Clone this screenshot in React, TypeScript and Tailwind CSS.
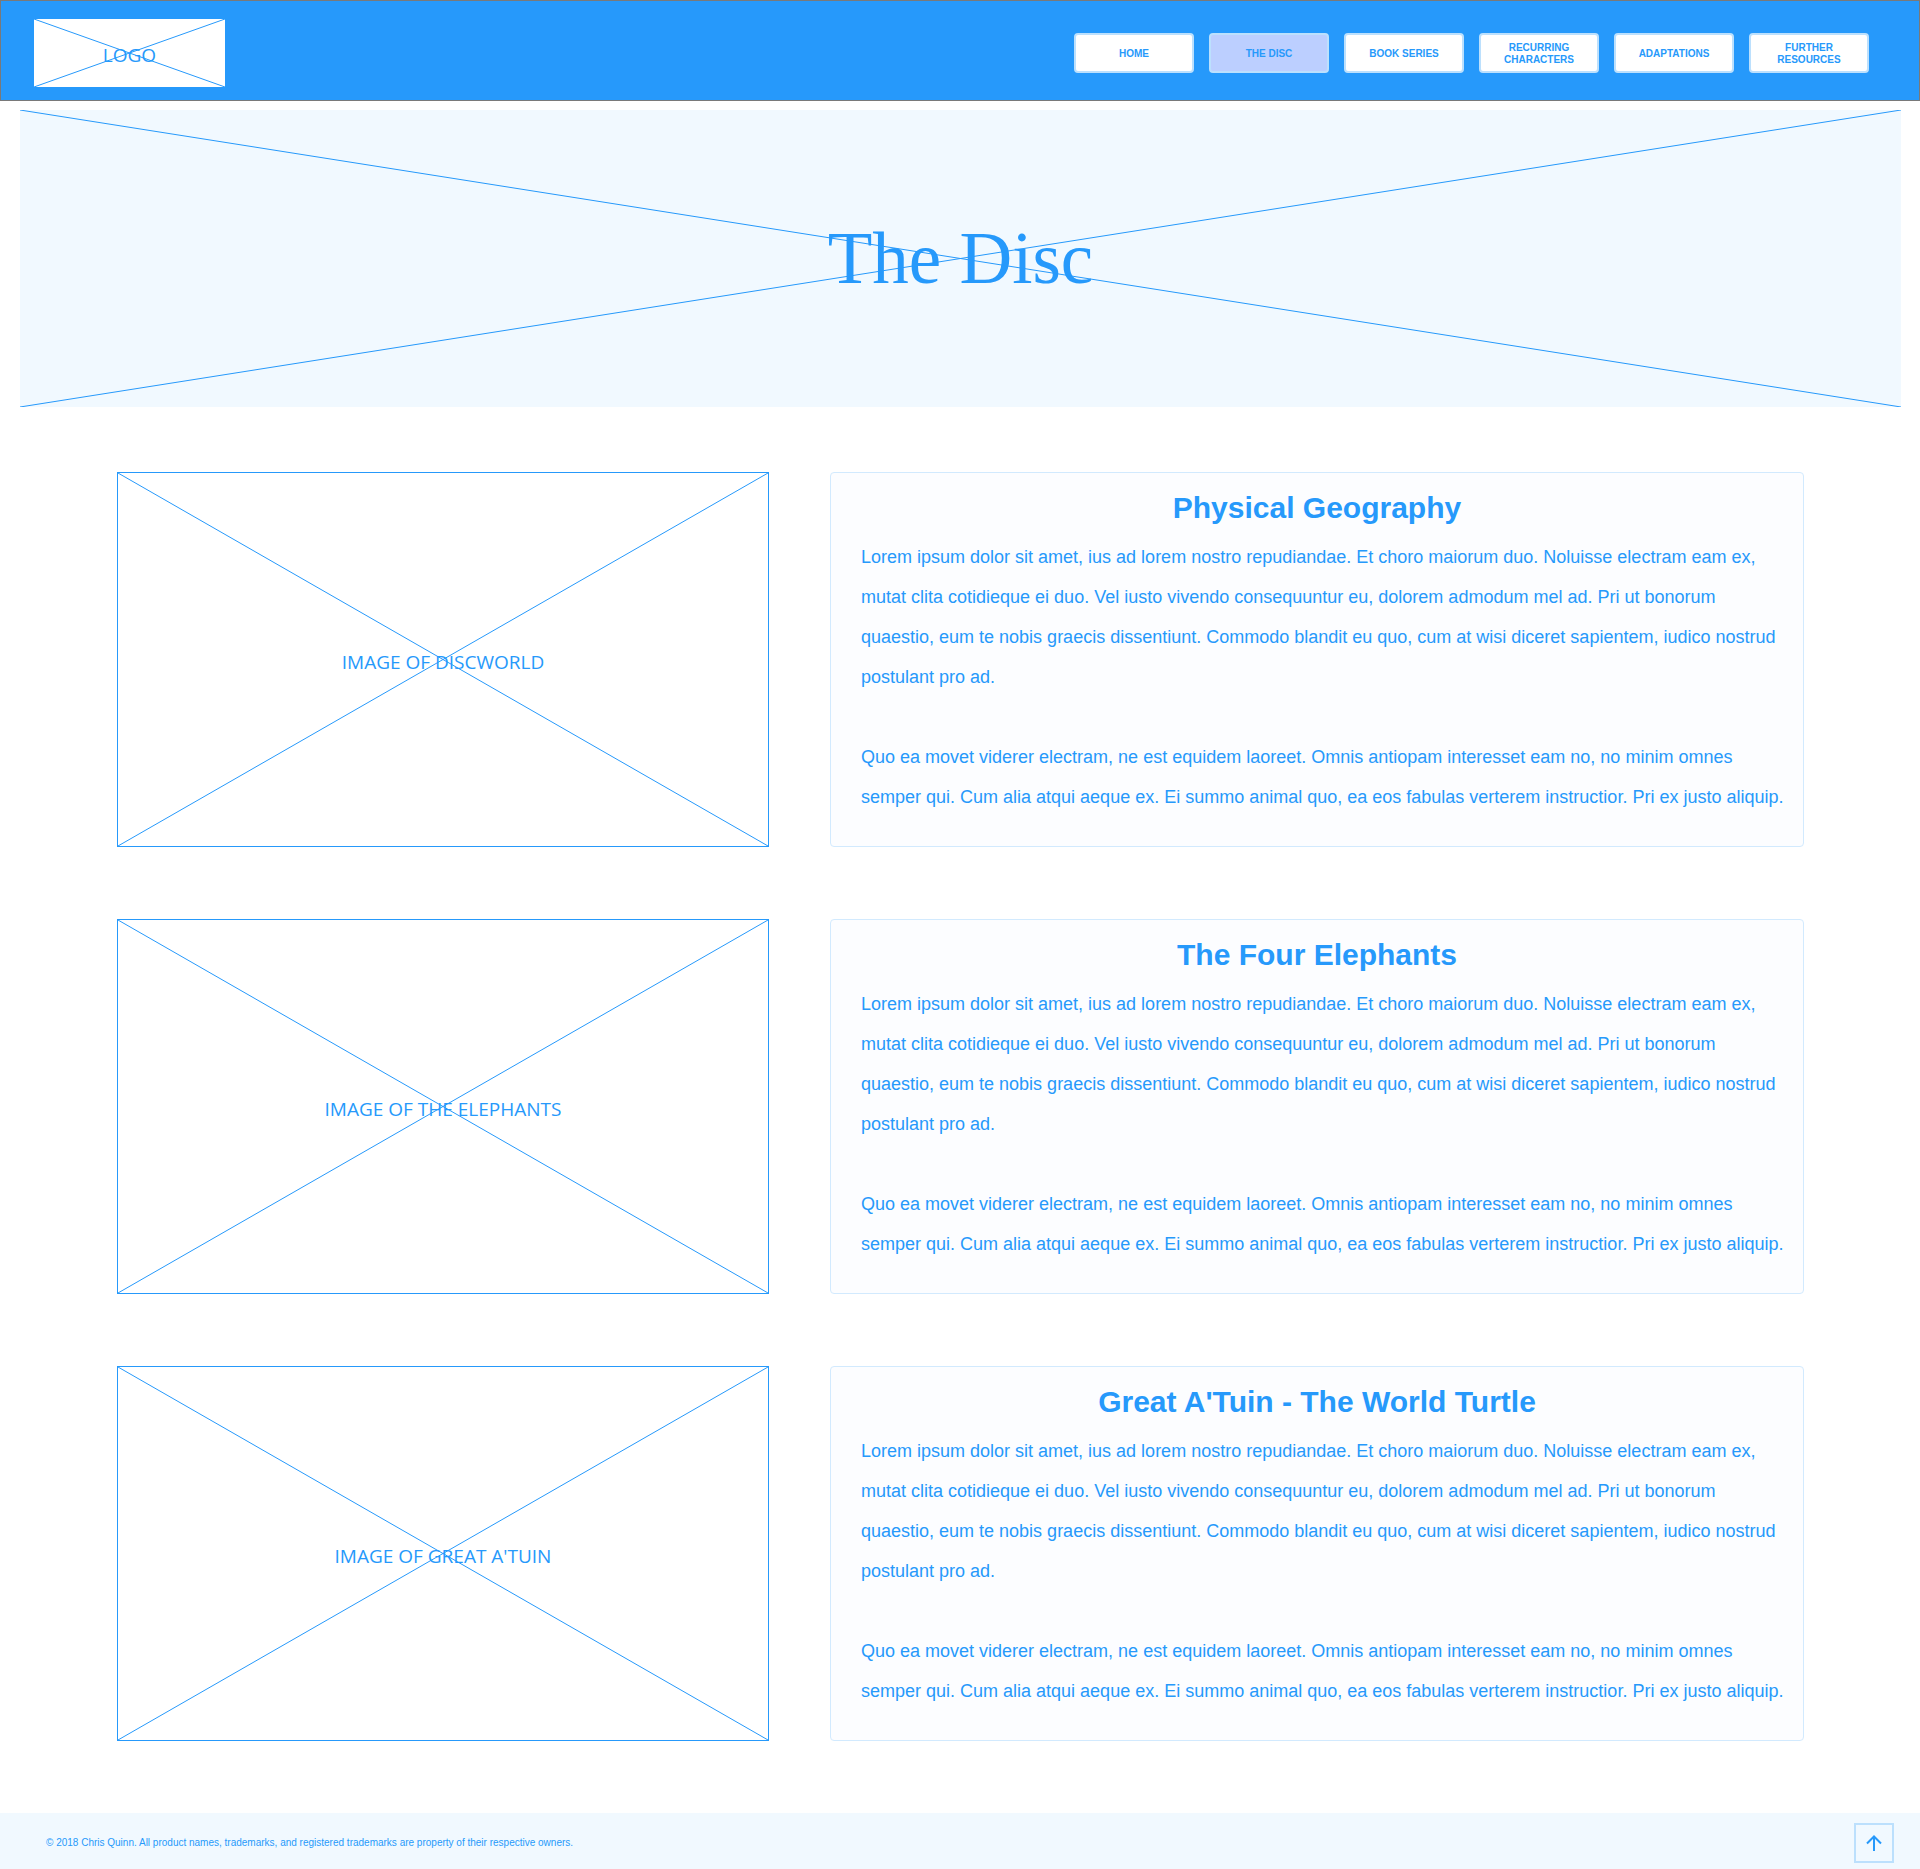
const NAV_ITEMS = [
  { label: 'HOME', href: '#home' },
  { label: 'THE DISC', href: '#the-disc', current: true },
  { label: 'BOOK SERIES', href: '#book-series' },
  { label: 'RECURRING CHARACTERS', href: '#characters' },
  { label: 'ADAPTATIONS', href: '#adaptations' },
  { label: 'FURTHER RESOURCES', href: '#resources' },
];

const SECTIONS = [
  { title: 'Physical Geography', image: 'IMAGE OF DISCWORLD' },
  { title: 'The Four Elephants', image: 'IMAGE OF THE ELEPHANTS' },
  { title: "Great A'Tuin - The World Turtle", image: "IMAGE OF GREAT A'TUIN" },
];

/** Diagonal cross that fills its positioned parent. */
function Cross() {
  return (
    <svg
      aria-hidden="true"
      className="absolute inset-0 h-full w-full"
      viewBox="0 0 100 100"
      preserveAspectRatio="none"
      fill="none"
      stroke="#2699fb"
    >
      <path d="M0 0L100 100M0 100L100 0" vectorEffect="non-scaling-stroke" />
    </svg>
  );
}

function Header() {
  return (
    <header className="flex items-center justify-between border border-[#797979] bg-[#2699fb] pt-[18px] pr-[50px] pb-[13px] pl-[33px]">
      <a
        href="#home"
        className="relative flex h-[68px] w-[191px] items-center justify-center bg-white pt-1 font-['Open_Sans',sans-serif] text-[19px] leading-6"
      >
        <Cross />
        LOGO
      </a>
      <nav aria-label="Main" className="flex gap-[15px]">
        {NAV_ITEMS.map((item) => (
          <a
            key={item.label}
            href={item.href}
            aria-current={item.current ? 'page' : undefined}
            className={
              item.current
                ? 'flex h-10 w-[120px] items-center justify-center rounded border-2 border-[#bce0fd] bg-[#bccfff] px-5 pt-px text-center text-[10px] leading-3 font-bold'
                : 'flex h-10 w-[120px] items-center justify-center rounded border-2 border-[#bce0fd] bg-white px-5 pt-px text-center text-[10px] leading-3 font-bold'
            }
          >
            {item.label}
          </a>
        ))}
      </nav>
    </header>
  );
}

function Section({ title, image }: { title: string; image: string }) {
  return (
    <section className="grid grid-cols-[652fr_974fr] gap-[61px]">
      <div
        role="img"
        aria-label={image}
        className="relative flex items-center justify-center border border-[#2699fb] pt-1 font-['Open_Sans',sans-serif] text-[19px] leading-6"
      >
        <Cross />
        {image}
      </div>
      <article className="rounded border border-[#d2eafe] bg-[#fcfdff] pt-[15px] pb-[29px]">
        <h2 className="mb-[9px] text-center text-[30px] leading-10 font-bold">{title}</h2>
        <div className="flex flex-col gap-10 pr-[18px] pl-[30px] text-lg leading-10">
          <p>
            Lorem ipsum dolor sit amet, ius ad lorem nostro repudiandae. Et choro maiorum duo. Noluisse electram eam
            ex, mutat clita cotidieque ei duo. Vel iusto vivendo consequuntur eu, dolorem admodum mel ad. Pri ut
            bonorum quaestio, eum te nobis graecis dissentiunt. Commodo blandit eu quo, cum at wisi diceret sapientem,
            iudico nostrud postulant pro ad.
          </p>
          <p>
            Quo ea movet viderer electram, ne est equidem laoreet. Omnis antiopam interesset eam no, no minim omnes
            semper qui. Cum alia atqui aeque ex. Ei summo animal quo, ea eos fabulas verterem instructior. Pri ex
            justo aliquip.
          </p>
        </div>
      </article>
    </section>
  );
}

function Footer() {
  return (
    <footer className="flex items-center justify-between bg-[#f1f9ff] pt-[10px] pr-[26px] pb-[6px] pl-[46px]">
      <p className="text-[10px] leading-3">
        © 2018 Chris Quinn. All product names, trademarks, and registered trademarks are property of their respective
        owners.
      </p>
      <button
        type="button"
        aria-label="Back to top"
        onClick={() => window.scrollTo({ top: 0 })}
        className="flex h-10 w-10 items-center justify-center border-2 border-[#bce0fd]"
      >
        <svg aria-hidden="true" className="h-4 w-4" viewBox="0 0 16 16" fill="none" stroke="#2699fb" strokeWidth="2">
          <path d="M8 16V1.5M1 8.5L8 1.5L15 8.5" />
        </svg>
      </button>
    </footer>
  );
}

export default function App() {
  return (
    <div className="bg-white font-['Liberation_Sans',Arial,sans-serif] text-[#2699fb]">
      <Header />
      <main>
        <div className="relative mt-[9px] mr-[19px] ml-5 flex h-[297px] items-center justify-center bg-[#f1f9ff]">
          <Cross />
          <h1 className="font-['Liberation_Serif',serif] text-[73px] leading-none">The Disc</h1>
        </div>
        <div className="flex flex-col gap-[72px] pt-[65px] pr-[116px] pb-[72px] pl-[117px]">
          {SECTIONS.map((section) => (
            <Section key={section.title} title={section.title} image={section.image} />
          ))}
        </div>
      </main>
      <Footer />
    </div>
  );
}
